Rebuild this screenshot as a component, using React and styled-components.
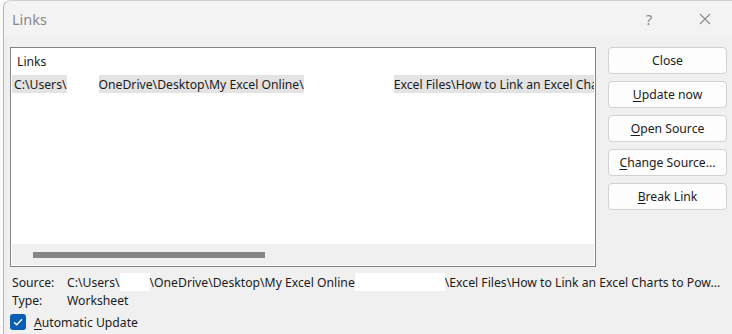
import React from 'react';
import styled, { createGlobalStyle } from 'styled-components';

const GlobalStyle = createGlobalStyle`
    html, body {
        margin:0;
        padding:0;
        background:#ffffff;
    }
    #root {
        width:732px;
        height:334px;
        overflow:hidden;
    }
`;

const Page = styled.div`
    width:732px;height:334px;
    display:flex;
    background:#fbfbfb;
    font-family:"Noto Sans", "Open Sans", sans-serif;
    font-size:12.2px;
    color:#1b1b1b;
`;

const Dialog = styled.div`
    margin-left:3px;
    flex:1;
    display:flex;
    flex-direction:column;
    background:#f0f0f0;
    border-left:1px solid #b4b4b4;
    border-top:1px solid #cfcfcf;
    border-top-left-radius:8px;
    overflow:hidden;
`;

const TitleBar = styled.div`
    height:35px;
    display:flex;
    align-items:center;
    background:#f3f3f3;
    padding-left:8px;
    .title{
        flex:1;
        font-size:14.5px;
        color:#8a8a8a;
    }
`;

const CaptionButton = styled.div`
    width:46px;height:35px;
    display:flex;
    align-items:center;
    justify-content:center;
    color:#8a8a8a;
    font-size:15px;
    margin-right:${props => props.$last ? '4px' : '10px'};
`;

const Body = styled.div`
    padding:11px 0 0 6px;
    display:flex;
    flex-direction:column;
`;

const TopRow = styled.div`
    display:flex;
    gap:12px;
`;

const ListBox = styled.div`
    width:584px;height:218px;
    border:1px solid #838383;
    background:#ffffff;
    display:flex;
    flex-direction:column;
    overflow:hidden;
`;

const ListHeader = styled.div`
    height:27px;
    display:flex;
    align-items:center;
    padding-left:6px;
`;

const ListRow = styled.div`
    height:18px;
    display:flex;
    align-items:center;
    background:${props => props.$selected ? '#e3e3e3' : 'transparent'};
    margin:0 1px;
    padding-left:2px;
    white-space:nowrap;
    overflow:hidden;
`;

const Redact = styled.span`
    display:inline-block;
    flex:none;
    width:${props => props.$w}px;
    height:${props => props.$h || 18}px;
    background:#ffffff;
`;

const ListFill = styled.div`
    flex:1;
`;

const HScroll = styled.div`
    height:21px;
    margin:0 1px 1px 1px;
    background:#f0f0f0;
    display:flex;
    align-items:center;
    padding-left:21px;
    .thumb{
        width:232px;height:6px;
        background:#868686;
    }
`;

const ButtonColumn = styled.div`
    display:flex;
    flex-direction:column;
    gap:7px;
`;

const Button = styled.button`
    width:119px;height:27px;
    border:1px solid #d2d2d2;
    border-radius:4px;
    background:#fdfdfd;
    font-family:inherit;
    font-size:12.2px;
    color:#1b1b1b;
    padding:0;
    u{ text-underline-offset:2px; }
`;

const InfoGrid = styled.div`
    margin-top:6px;
    padding-left:2px;
    display:grid;
    grid-template-columns:55px 1fr;
    grid-auto-rows:18px;
    align-items:center;
    .value{
        display:flex;
        align-items:center;
        white-space:nowrap;
    }
`;

const CheckRow = styled.label`
    margin-top:4px;
    display:flex;
    align-items:center;
    gap:8px;
    height:18px;
    u{ text-underline-offset:2px; }
`;

const CheckBox = styled.span`
    width:16px;height:16px;
    border-radius:3px;
    background:#0a5fb4;
    display:flex;
    align-items:center;
    justify-content:center;
`;

const App = () => {
    return (
        <Page>
            <GlobalStyle />
            <Dialog>
                <TitleBar>
                    <span className="title">Links</span>
                    <CaptionButton>?</CaptionButton>
                    <CaptionButton $last>
                        <svg width="12" height="12" viewBox="0 0 12 12">
                            <path d="M1 1L11 11M11 1L1 11" stroke="#8a8a8a" strokeWidth="1.1" fill="none" />
                        </svg>
                    </CaptionButton>
                </TitleBar>
                <Body>
                    <TopRow>
                        <ListBox>
                            <ListHeader>Links</ListHeader>
                            <ListRow $selected>
                                <span>C:\Users\</span>
                                <Redact $w={32} />
                                <span>OneDrive\Desktop\My Excel Online\</span>
                                <Redact $w={90} />
                                <span>Excel Files\How to Link an Excel Charts to PowerPoint.xlsx</span>
                            </ListRow>
                            <ListFill />
                            <HScroll><div className="thumb" /></HScroll>
                        </ListBox>
                        <ButtonColumn>
                            <Button>Close</Button>
                            <Button><u>U</u>pdate now</Button>
                            <Button><u>O</u>pen Source</Button>
                            <Button><u>C</u>hange Source...</Button>
                            <Button><u>B</u>reak Link</Button>
                        </ButtonColumn>
                    </TopRow>
                    <InfoGrid>
                        <span>Source:</span>
                        <span className="value">
                            <span>C:\Users\</span>
                            <Redact $w={30} />
                            <span>\OneDrive\Desktop\My Excel Online</span>
                            <Redact $w={90} />
                            <span>\Excel Files\How to Link an Excel Charts to Pow...</span>
                        </span>
                        <span>Type:</span>
                        <span className="value">Worksheet</span>
                    </InfoGrid>
                    <CheckRow>
                        <CheckBox>
                            <svg width="10" height="8" viewBox="0 0 10 8">
                                <path d="M1 4.2L3.7 6.8L9 1.2" stroke="#ffffff" strokeWidth="1.3" fill="none" />
                            </svg>
                        </CheckBox>
                        <span><u>A</u>utomatic Update</span>
                    </CheckRow>
                </Body>
            </Dialog>
        </Page>
    );
};

export default App;
